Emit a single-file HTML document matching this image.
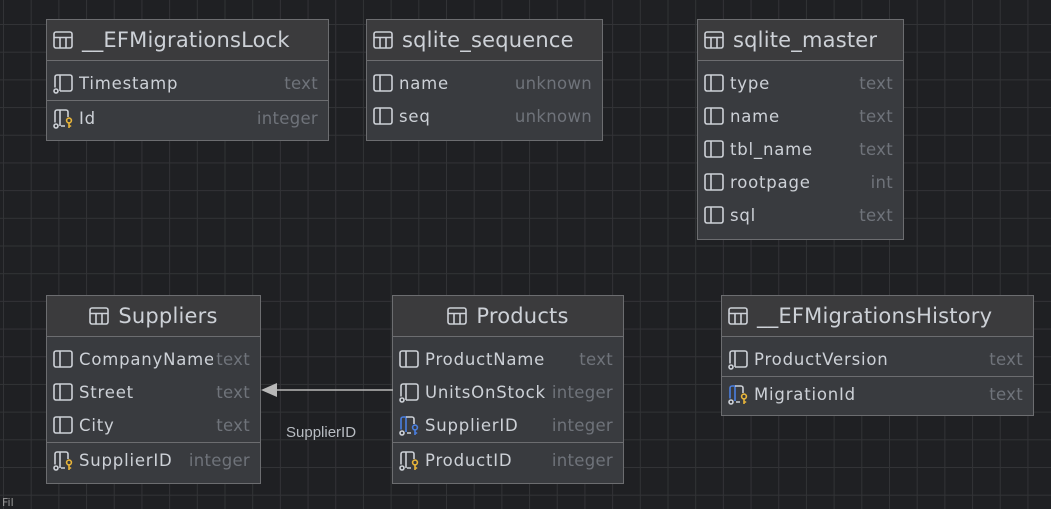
<!DOCTYPE html>
<html><head><meta charset="utf-8"><style>
html,body{margin:0;padding:0}
body{width:1051px;height:504px;overflow:hidden;position:relative;background-color:#1f2023;
background-image:linear-gradient(to right,#323336 1px,transparent 1px),linear-gradient(to bottom,#323336 1px,transparent 1px);
background-size:27.7px 27.7px;background-position:3px 24px;font-family:"DejaVu Sans","Liberation Sans",sans-serif}
.t{position:absolute;background:#393b3f;border:1px solid #6c6d70;box-sizing:border-box;color:#cdd1d7}
.h{height:40px;background:#3b3b3d;border-bottom:1px solid #6c6d70;display:flex;align-items:center;font-size:21px;letter-spacing:.2px;white-space:nowrap}
.h svg{margin-right:9px}
.c{justify-content:center}
.l{padding-left:6px}
.s{padding:6px 0 0}
.s.last{padding-bottom:6px}
.s+.s{border-top:1px solid #6c6d70;padding-top:1px}
.r{height:33px;display:flex;align-items:center;position:relative;font-size:16.5px;letter-spacing:.8px}
.r svg{margin-left:6px;margin-right:6px;flex:none}
.n{overflow:hidden;white-space:nowrap}
.y{position:absolute;right:10px;color:#6f737a;font-size:16.5px;letter-spacing:.3px}
</style></head><body>
<svg width="0" height="0" style="position:absolute">
<defs>
<g id="tb" fill="none" stroke="#cdd1d7" stroke-width="1.6"><rect x="1" y="2" width="18" height="16" rx="2"/><path d="M1 7.5h18M7 7.5V18M13 7.5V18"/></g>
<g id="col" fill="none" stroke="#cdd1d7" stroke-width="1.6"><rect x="1" y="2" width="18" height="16" rx="2"/><path d="M7 2v16"/></g>
<g id="nn" fill="none" stroke="#cdd1d7" stroke-width="1.6"><path d="M2 14.5V4a2 2 0 0 1 2-2h13a2 2 0 0 1 2 2v12a2 2 0 0 1-2 2H7M7 2v16"/><circle cx="3" cy="18" r="2"/></g>
<g id="pk" fill="none" stroke-width="1.6"><path stroke="#cdd1d7" d="M2 14.5V4a2 2 0 0 1 2-2h9a2 2 0 0 1 2 2v5M7 2v16M8 18h4"/><circle stroke="#cdd1d7" cx="3" cy="18" r="2"/><g stroke="#e8b53a"><circle cx="16" cy="12.5" r="2.4"/><path d="M16 15v5M16 18h2.2"/></g></g>
<g id="fk" fill="none" stroke-width="1.6"><path stroke="#4a7fe0" d="M2 14.5V4a2 2 0 0 1 2-2h3v15"/><path stroke="#cdd1d7" d="M7 2h6a2 2 0 0 1 2 2v5M8 18h4"/><circle stroke="#cdd1d7" cx="3" cy="18" r="2"/><g stroke="#4a7fe0"><circle cx="16" cy="12.5" r="2.4"/><path d="M16 15v5M16 18h2.2"/></g></g>
<g id="pkfk" fill="none" stroke-width="1.6"><path stroke="#4a7fe0" d="M2 14.5V4a2 2 0 0 1 2-2h3v15"/><path stroke="#cdd1d7" d="M7 2h6a2 2 0 0 1 2 2v5M8 18h4"/><circle stroke="#cdd1d7" cx="3" cy="18" r="2"/><g stroke="#e8b53a"><circle cx="16" cy="12.5" r="2.4"/><path d="M16 15v5M16 18h2.2"/></g></g>
</defs></svg>

<div class="t" style="left:46px;top:19px;width:283px;height:122px">
<div class="h l"><svg width="20" height="21"><use href="#tb"/></svg>__EFMigrationsLock</div>
<div class="s"><div class="r"><svg width="20" height="21"><use href="#nn"/></svg><span class="n" style="width:98px">Timestamp</span><span class="y">text</span></div></div>
<div class="s last"><div class="r"><svg width="20" height="21"><use href="#pk"/></svg><span class="n" style="width:98px">Id</span><span class="y">integer</span></div></div>
</div>

<div class="t" style="left:366px;top:19px;width:237px;height:122px">
<div class="h l"><svg width="20" height="21"><use href="#tb"/></svg>sqlite_sequence</div>
<div class="s last"><div class="r"><svg width="20" height="21"><use href="#col"/></svg><span class="n">name</span><span class="y">unknown</span></div>
<div class="r"><svg width="20" height="21"><use href="#col"/></svg><span class="n">seq</span><span class="y">unknown</span></div></div>
</div>

<div class="t" style="left:697px;top:19px;width:207px;height:221px">
<div class="h l"><svg width="20" height="21"><use href="#tb"/></svg>sqlite_master</div>
<div class="s last">
<div class="r"><svg width="20" height="21"><use href="#col"/></svg><span class="n" style="width:82px">type</span><span class="y">text</span></div>
<div class="r"><svg width="20" height="21"><use href="#col"/></svg><span class="n" style="width:82px">name</span><span class="y">text</span></div>
<div class="r"><svg width="20" height="21"><use href="#col"/></svg><span class="n" style="width:82px">tbl_name</span><span class="y">text</span></div>
<div class="r"><svg width="20" height="21"><use href="#col"/></svg><span class="n" style="width:82px">rootpage</span><span class="y">int</span></div>
<div class="r"><svg width="20" height="21"><use href="#col"/></svg><span class="n" style="width:82px">sql</span><span class="y">text</span></div>
</div></div>

<div class="t" style="left:46px;top:295px;width:215px;height:189px">
<div class="h c"><svg width="20" height="21"><use href="#tb"/></svg>Suppliers</div>
<div class="s">
<div class="r"><svg width="20" height="21"><use href="#col"/></svg><span class="n" style="width:134px">CompanyName</span><span class="y">text</span></div>
<div class="r"><svg width="20" height="21"><use href="#col"/></svg><span class="n" style="width:134px">Street</span><span class="y">text</span></div>
<div class="r"><svg width="20" height="21"><use href="#col"/></svg><span class="n" style="width:134px">City</span><span class="y">text</span></div>
</div>
<div class="s last"><div class="r"><svg width="20" height="21"><use href="#pk"/></svg><span class="n" style="width:93px">SupplierID</span><span class="y">integer</span></div></div>
</div>

<div class="t" style="left:392px;top:295px;width:232px;height:189px">
<div class="h c"><svg width="20" height="21"><use href="#tb"/></svg>Products</div>
<div class="s">
<div class="r"><svg width="20" height="21"><use href="#col"/></svg><span class="n" style="width:123px">ProductName</span><span class="y">text</span></div>
<div class="r"><svg width="20" height="21"><use href="#nn"/></svg><span class="n" style="width:123px">UnitsOnStock</span><span class="y">integer</span></div>
<div class="r"><svg width="20" height="21"><use href="#fk"/></svg><span class="n" style="width:93px">SupplierID</span><span class="y">integer</span></div>
</div>
<div class="s last"><div class="r"><svg width="20" height="21"><use href="#pk"/></svg><span class="n" style="width:93px">ProductID</span><span class="y">integer</span></div></div>
</div>

<div class="t" style="left:721px;top:295px;width:313px;height:121px">
<div class="h l"><svg width="20" height="21"><use href="#tb"/></svg>__EFMigrationsHistory</div>
<div class="s"><div class="r"><svg width="20" height="21"><use href="#nn"/></svg><span class="n" style="width:139px">ProductVersion</span><span class="y">text</span></div></div>
<div class="s last"><div class="r"><svg width="20" height="21"><use href="#pkfk"/></svg><span class="n" style="width:101px">MigrationId</span><span class="y">text</span></div></div>
</div>

<svg style="position:absolute;left:260px;top:380px" width="133" height="20">
<path d="M14 10H133" stroke="#b8b8b8" stroke-width="1.5"/><path d="M1 10L17 3V17Z" fill="#b8b8b8"/></svg>
<div style="position:absolute;left:286px;top:424px;color:#b8bcc2;font-size:15px;font-family:'Liberation Sans',sans-serif">SupplierID</div>
<div style="position:absolute;left:2px;top:496px;color:#999;font-size:11px">Fil</div>
</body></html>
